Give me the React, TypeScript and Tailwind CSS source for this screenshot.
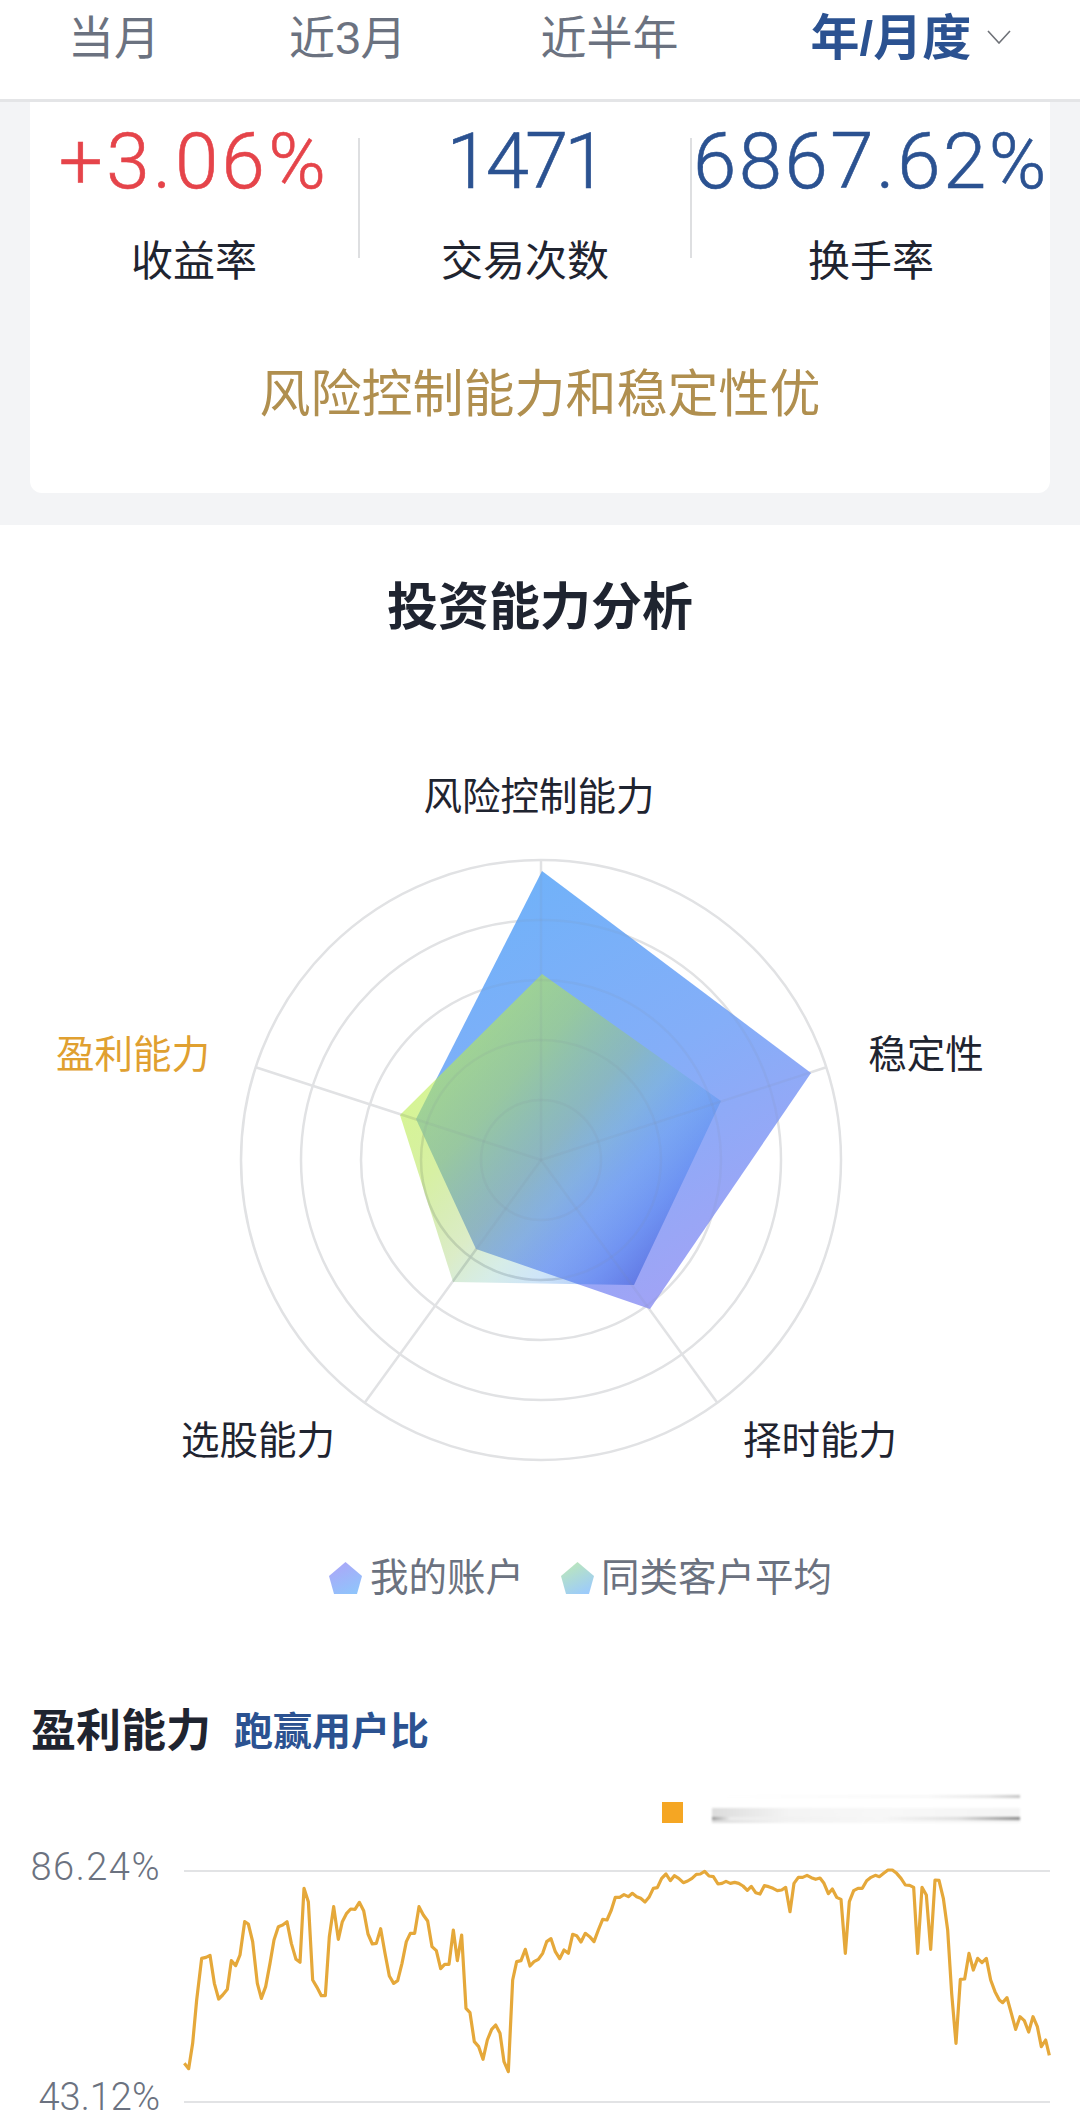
const zoomA = [[43,730],[56,746],[68,670],[80,540],[95,415],[108,412],[120,406],[133,490],[146,537],[158,525],[172,508],[184,422],[197,437],[210,405],[224,305],[235,312],[248,365],[262,490],[274,535],[287,500],[300,430],[312,360],[325,320],[338,315],[351,305],[364,370],[378,418],[390,427],[402,205],[415,245],[428,480],[441,502],[454,527],[466,527],[478,350],[491,260],[505,358],[517,305],[530,280],[542,267],[555,268],[568,247],[581,272],[594,342],[607,372],[619,370],[632,326],[645,400],[658,468],[671,490],[683,482],[696,430],[709,365],[721,340],[734,340],[747,260],[760,285],[773,303],[786,380],[799,392],[812,446],[824,433],[837,433],[850,330],[862,422],[875,345],[888,565],[900,578],[913,665],[926,680],[939,718],[952,660],[965,628],[977,615],[990,640],[1002,725],[1015,755],[1028,480],[1040,425],[1053,422],[1066,388],[1080,438],[1092,425],[1105,418],[1118,400],[1130,365],[1143,356],[1156,395],[1169,416],[1182,390],[1195,400],[1208,343],[1220,347],[1233,366],[1246,340],[1259,350],[1272,365],[1285,330],[1298,298],[1311,300],[1324,270],[1336,232],[1349,232],[1362,224]];
const zoomB = [[25,230],[37,220],[50,230],[62,235],[75,246],[87,232],[100,205],[112,203],[125,175],[138,162],[151,182],[163,167],[176,175],[190,188],[203,183],[216,175],[229,163],[241,162],[254,154],[267,168],[280,170],[294,192],[306,190],[318,184],[331,190],[344,187],[356,190],[369,198],[382,211],[394,199],[407,218],[420,222],[433,197],[446,200],[459,205],[472,212],[485,210],[497,202],[510,275],[522,190],[535,172],[548,172],[561,166],[574,173],[587,178],[600,174],[612,190],[625,221],[637,207],[650,232],[663,238],[676,400],[688,245],[701,212],[714,205],[727,205],[740,182],[753,172],[766,166],[778,170],[791,160],[804,150],[817,150],[830,160],[843,175],[856,195],[869,196],[881,202],[893,400],[906,202],[919,225],[932,388],[945,180],[957,181],[970,235],[983,330],[995,520],[1008,670],[1021,478],[1034,477],[1047,400],[1060,450],[1073,415],[1086,428],[1099,415],[1112,480],[1125,515],[1138,540],[1148,548],[1161,533],[1174,580],[1187,628],[1200,590],[1213,602],[1226,636],[1239,590],[1252,620],[1264,680],[1277,660],[1288,706]];

// chart viewBox starts at x=170, y=1860
const linePoints = [
  ...zoomA.map(([x, y]) => `${x / 3},${y / 3 - 40}`),
  ...zoomB.map(([x, y]) => `${450 + x / 3},${y / 3 - 40}`),
].join(' ');

const tabs = [
  { label: '当月', className: 'ml-[68px]' },
  { label: '近3月', className: 'ml-[129px]' },
  { label: '近半年', className: 'ml-[134px]' },
];

const cx = 541;
const cy = 1160;
const spokes = [0, 72, 144, 216, 288].map((deg) => {
  const rad = (deg * Math.PI) / 180;
  return { x: cx + 300 * Math.sin(rad), y: cy - 300 * Math.cos(rad) };
});

const minePoints = '542,871 811,1073 650,1309 476,1249 416,1119';
const peerPoints = '542,974 721,1101 634,1285 453,1282 400,1115';

function Grid({ stroke, opacity }: { stroke: string; opacity: number }) {
  return (
    <g fill="none" stroke={stroke} strokeOpacity={opacity} strokeWidth="2.5">
      {[60, 120, 180, 240, 300].map((r) => (
        <circle key={r} cx={cx} cy={cy} r={r} />
      ))}
      {spokes.map((p) => (
        <line key={p.x} x1={cx} y1={cy} x2={p.x} y2={p.y} />
      ))}
    </g>
  );
}

function Radar() {
  return (
    <svg width="1080" height="740" viewBox="0 740 1080 740" className="block">
      <defs>
        <linearGradient id="mine" gradientUnits="userSpaceOnUse" x1="480" y1="880" x2="720" y2="1300">
          <stop offset="0" stopColor="#6fb2f9" />
          <stop offset="0.5" stopColor="#84aef8" />
          <stop offset="1" stopColor="#a4a2f5" />
        </linearGradient>
        <linearGradient id="peers" gradientUnits="userSpaceOnUse" x1="425" y1="1060" x2="665" y2="1270">
          <stop offset="0" stopColor="#bef050" stopOpacity="0.62" />
          <stop offset="0.25" stopColor="#afe148" stopOpacity="0.5" />
          <stop offset="0.47" stopColor="#96c85a" stopOpacity="0.34" />
          <stop offset="0.6" stopColor="#6ebeaa" stopOpacity="0.28" />
          <stop offset="0.72" stopColor="#3c96e6" stopOpacity="0.25" />
          <stop offset="0.85" stopColor="#286eeb" stopOpacity="0.35" />
          <stop offset="1" stopColor="#1e3cc8" stopOpacity="0.5" />
        </linearGradient>
        <clipPath id="shapes">
          <polygon points={minePoints} />
          <polygon points={peerPoints} />
        </clipPath>
      </defs>
      <Grid stroke="#e1e2e4" opacity={1} />
      <polygon points={minePoints} fill="url(#mine)" />
      <polygon points={peerPoints} fill="url(#peers)" />
      <g clipPath="url(#shapes)">
        <Grid stroke="#7f8a99" opacity={0.1} />
      </g>
      <g fontSize="38.5" fill="#1f2430">
        <text x="539" y="810" textAnchor="middle">风险控制能力</text>
        <text x="926" y="1068" textAnchor="middle">稳定性</text>
        <text x="133" y="1068" textAnchor="middle" fill="#e0a030">盈利能力</text>
        <text x="258" y="1454" textAnchor="middle">选股能力</text>
        <text x="820" y="1454" textAnchor="middle">择时能力</text>
      </g>
    </svg>
  );
}

function LegendIcon({ id, from, to }: { id: string; from: string; to: string }) {
  return (
    <svg width="33" height="32" viewBox="0 0 33 32" className="shrink-0">
      <defs>
        <linearGradient id={id} x1="0.2" y1="0" x2="0.7" y2="1">
          <stop offset="0" stopColor={from} />
          <stop offset="1" stopColor={to} />
        </linearGradient>
      </defs>
      <polygon points="16.5,0 33,14 28,32 5,32 0,14" fill={`url(#${id})`} />
    </svg>
  );
}

export default function App() {
  return (
    <div className="w-[1080px] h-[2120px] overflow-hidden bg-white font-['Liberation_Sans','Noto_Sans_CJK_SC',sans-serif] text-[#1f2430]">
      {/* Tabs */}
      <div className="h-[102px] border-b-[3px] border-[#e4e5e7] flex items-start pt-[13px] text-[#6b7280] text-[46px] leading-[50px]">
        {tabs.map((t) => (
          <span key={t.label} className={t.className}>{t.label}</span>
        ))}
        <span className="ml-[132px] text-[49px] font-bold text-[#2b5291]">年/月度</span>
        <svg width="24" height="14" viewBox="0 0 24 14" className="ml-[16px] mt-[17px]" fill="none" stroke="#6f7278" strokeWidth="1.6">
          <path d="M1 1 L12 13 L23 1" />
        </svg>
      </div>

      {/* Summary card */}
      <div className="h-[423px] bg-[#f3f4f6] px-[30px]">
        <div className="h-[391px] bg-white rounded-b-xl">
          <div className="flex items-start">
            <Stat width="w-[328px]" value="+3.06%" label="收益率" valueClass="text-[#e5444a] tracking-[3.4px]" />
            <div className="w-[2px] h-[120px] mt-[36px] bg-[#dedfe1]" />
            <Stat width="w-[330px]" value="1471" label="交易次数" valueClass="text-[#2b5291] tracking-[-4px]" />
            <div className="w-[2px] h-[120px] mt-[36px] bg-[#dedfe1]" />
            <Stat width="w-[358px]" value="6867.62%" label="换手率" valueClass="text-[#2b5291] tracking-[2.5px]" />
          </div>
          <p className="mt-[78px] text-center text-[51px] leading-[60px] text-[#b08f4f]">风险控制能力和稳定性优</p>
        </div>
      </div>

      {/* Radar */}
      <h2 className="mt-[53px] text-center text-[51px] leading-[60px] font-bold">投资能力分析</h2>
      <div className="mt-[102px]">
        <Radar />
      </div>

      <div className="mt-[73px] flex items-center h-[50px] pl-[329px] text-[38.5px] leading-[50px] text-[#6b7280]">
        <LegendIcon id="legendMine" from="#aca6f8" to="#90c4fb" />
        <span className="ml-[8px]">我的账户</span>
        <span className="ml-[37px]"><LegendIcon id="legendPeers" from="#bde8b8" to="#9ccbfb" /></span>
        <span className="ml-[7px]">同类客户平均</span>
      </div>

      {/* Profit chart */}
      <div className="mt-[99px] flex items-center h-[60px] pl-[31px]">
        <h3 className="text-[45px] leading-[60px] font-bold">盈利能力</h3>
        <span className="ml-[23px] text-[39px] leading-[60px] font-bold text-[#2b5291]">跑赢用户比</span>
      </div>

      <div className="mt-[33px] flex items-end h-[28px] pl-[662px]">
        <div className="w-[21px] h-[21px] bg-[#f5a623]" />
        <div className="ml-[29px] w-[308px] h-[28px] blur-[1px]">
          <div className="h-[3px] bg-[linear-gradient(90deg,#fff_0,#f8f8f8_70%,#e4e4e4_90%,#c4c4c4_100%)]" />
          <div className="mt-[10px] h-[15px] pt-[9px] bg-[linear-gradient(90deg,#dcdcdc_0,#f4f4f4_25%,#f8f8f8_60%,#f4f4f4_100%)]">
            <div className="h-[3px] bg-[linear-gradient(90deg,#999_0,#eee_6%,#f7f7f7_55%,#ddd_80%,#8a8a8a_100%)]" />
          </div>
        </div>
      </div>

      <div className="relative mt-[37px] h-[260px]">
        <span className="absolute right-[919px] top-[-13px] text-[38px] leading-[40px] tracking-[1.5px] font-['Roboto'] font-light text-[#6b7280]">86.24%</span>
        <span className="absolute right-[920px] top-[217px] text-[38px] leading-[40px] font-['Roboto'] font-light text-[#6b7280]">43.12%</span>
        <svg width="910" height="260" viewBox="170 0 910 260" className="absolute left-[170px] top-0">
          <line x1="184" y1="11" x2="1050" y2="11" stroke="#e2e3e5" strokeWidth="2" />
          <line x1="184" y1="242" x2="1050" y2="242" stroke="#e2e3e5" strokeWidth="2" />
          <g transform="translate(170 0)">
            <polyline points={linePoints} fill="none" stroke="#e5a83a" strokeWidth="3.2" strokeLinejoin="round" />
          </g>
        </svg>
      </div>
    </div>
  );
}

function Stat({ width, value, label, valueClass }: { width: string; value: string; label: string; valueClass: string }) {
  return (
    <div className={`${width} text-center`}>
      <div className={`mt-[21px] text-[78px] leading-[78px] font-['Roboto'] font-light [-webkit-text-stroke:0.6px_currentColor] ${valueClass}`}>{value}</div>
      <div className="mt-[36px] text-[42px] leading-[50px]">{label}</div>
    </div>
  );
}
